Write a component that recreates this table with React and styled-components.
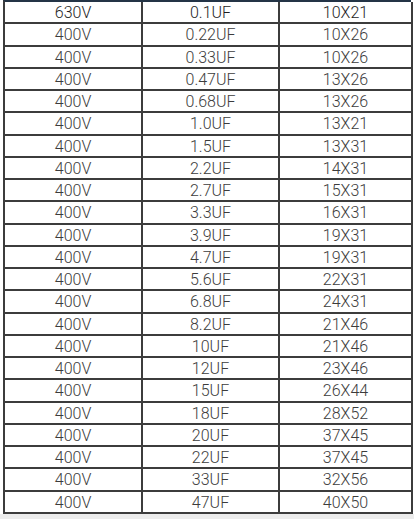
import styled, { createGlobalStyle } from 'styled-components';

const GlobalStyle = createGlobalStyle`
    html, body {
        margin: 0;
        padding: 0;
        background: #ffffff;
    }
`;

const Page = styled.div`
    width: 414px;
    height: 519px;
    overflow: hidden;
    display: flex;
    flex-direction: column;
`;

const Sheet = styled.div`
    display: grid;
    grid-template-columns: 138px 137px 133px;
    grid-auto-rows: 22.26px;
    margin-left: 3px;
    width: 408px;
    border-left: 2px solid #3c3c3c;
    border-top: 2px solid #243446;
    box-sizing: border-box;
`;

const Cell = styled.div`
    display: flex;
    align-items: center;
    justify-content: center;
    box-sizing: border-box;
    border-right: 2px solid #3c3c3c;
    border-bottom: 2px solid #3c3c3c;
    font-family: Roboto, "Liberation Sans", Arial, sans-serif;
    font-weight: 300;
    font-size: 16px;
    color: ${props => props.$head ? '#1e1e1e' : '#3c3c3c'};
    padding-top: 1px;
`;

const Strip = styled.div`
    flex: 1;
    background: #ececec;
`;

const rows = [
    ['630V', '0.1UF', '10X21'],
    ['400V', '0.22UF', '10X26'],
    ['400V', '0.33UF', '10X26'],
    ['400V', '0.47UF', '13X26'],
    ['400V', '0.68UF', '13X26'],
    ['400V', '1.0UF', '13X21'],
    ['400V', '1.5UF', '13X31'],
    ['400V', '2.2UF', '14X31'],
    ['400V', '2.7UF', '15X31'],
    ['400V', '3.3UF', '16X31'],
    ['400V', '3.9UF', '19X31'],
    ['400V', '4.7UF', '19X31'],
    ['400V', '5.6UF', '22X31'],
    ['400V', '6.8UF', '24X31'],
    ['400V', '8.2UF', '21X46'],
    ['400V', '10UF', '21X46'],
    ['400V', '12UF', '23X46'],
    ['400V', '15UF', '26X44'],
    ['400V', '18UF', '28X52'],
    ['400V', '20UF', '37X45'],
    ['400V', '22UF', '37X45'],
    ['400V', '33UF', '32X56'],
    ['400V', '47UF', '40X50'],
];

const App = () => {
    return (
        <Page>
            <GlobalStyle />
            <Sheet>
                {rows.map((row, i) =>
                    row.map((value, j) => (
                        <Cell key={`${i}-${j}`} $head={i === 0}>{value}</Cell>
                    ))
                )}
            </Sheet>
            <Strip />
        </Page>
    );
};

export default App;
